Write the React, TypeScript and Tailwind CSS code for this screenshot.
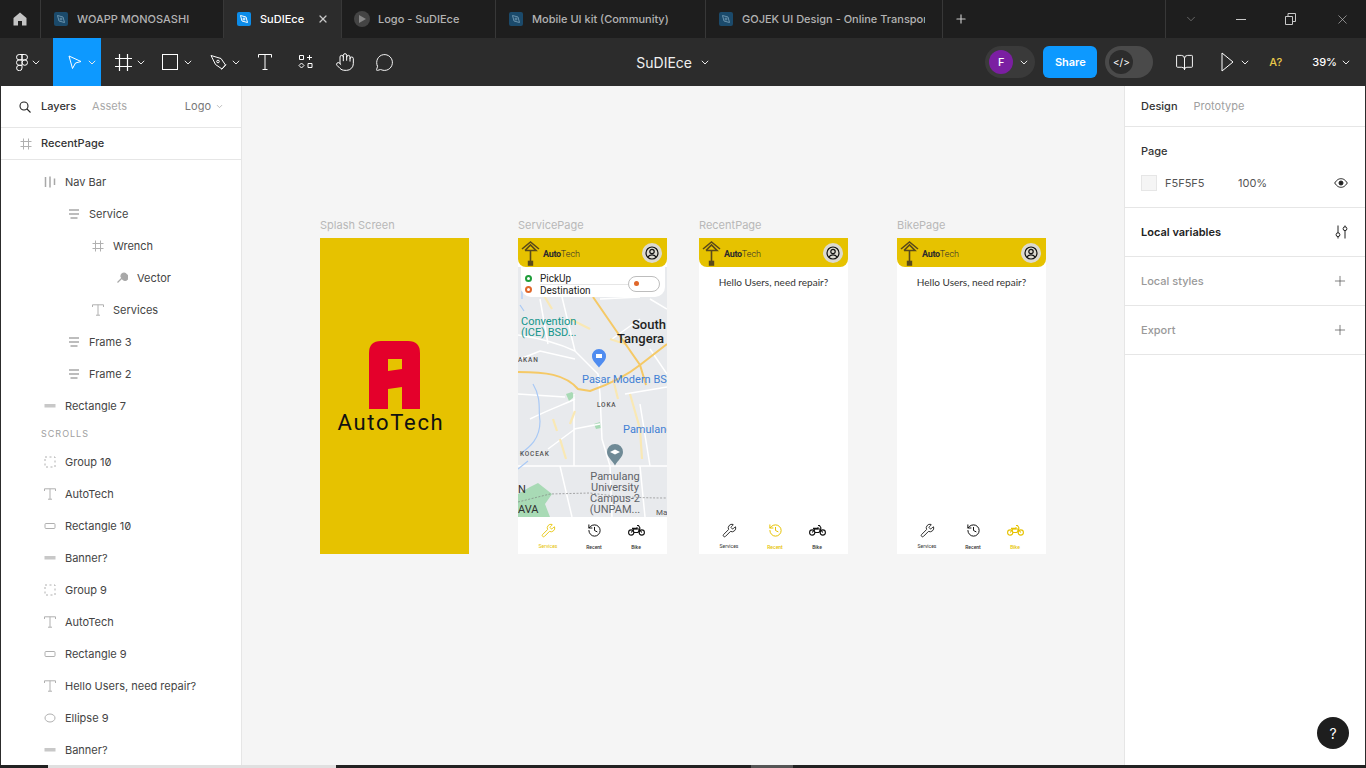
import { BookOpen, ChevronDown, Hand, History, MessageCircle, Plus, Wrench, X } from "lucide-react";

const font = "font-['Inter','Liberation_Sans',sans-serif]";

function TabIcon({ active }: { active?: boolean }) {
  return (
    <span className={`flex h-[14px] w-[14px] items-center justify-center rounded-[2px] ${active ? "bg-[#0c8ce9]" : "bg-[#1b4a6b]"}`}>
      <svg width="10" height="10" viewBox="0 0 10 10" fill="none" stroke={active ? "#fff" : "#6b93ad"} strokeWidth="1">
        <path d="M1.5 1.5 L7 3 L8.5 8.5 L3 7 Z" />
        <circle cx="5" cy="5" r="1" />
      </svg>
    </span>
  );
}

function Tab({ title, width, active, play, clip }: { title: string; width: string; active?: boolean; play?: boolean; clip?: boolean }) {
  return (
    <div className={`flex h-full items-center overflow-hidden border-r border-[#383838] ${play ? "gap-[8px] pl-[12px]" : "gap-[9px] pl-[13px]"} ${width} ${active ? "bg-[#2c2c2c]" : ""}`}>
      {play ? (
        <span className="flex h-[16px] w-[16px] shrink-0 items-center justify-center rounded-full bg-[#444]">
          <svg width="7" height="8" viewBox="0 0 7 8"><path d="M0 0 L7 4 L0 8 Z" fill="#888" /></svg>
        </span>
      ) : (
        <span className="shrink-0"><TabIcon active={active} /></span>
      )}
      <span className={`whitespace-nowrap text-[11px] font-medium ${clip ? "w-[183px] overflow-hidden" : ""} ${active ? "text-white" : "text-[#b3b3b3]"}`}>{title}</span>
      {active && <X size={12} strokeWidth={2.5} className="ml-[4px] shrink-0 text-[#c8c8c8]" />}
    </div>
  );
}

function TabBar() {
  return (
    <div className="flex h-[38px] shrink-0 items-center bg-[#1e1e1e]">
      <div className="flex h-full w-[41px] items-center justify-center border-r border-[#383838]">
        <svg width="14" height="14" viewBox="0 0 14 14"><path d="M7 0.5 L13.5 6 V13.5 H9 V9 H5 V13.5 H0.5 V6 Z" fill="#c4c4c4" /></svg>
      </div>
      <Tab title="WOAPP MONOSASHI" width="w-[183px]" />
      <Tab title="SuDIEce" width="w-[118px]" active />
      <Tab title="Logo - SuDIEce" width="w-[154px]" play />
      <Tab title="Mobile UI kit (Community)" width="w-[210px]" />
      <Tab title="GOJEK UI Design - Online Transport" width="w-[237px]" clip />
      <div className="flex w-[36px] justify-center"><Plus size={14} className="text-[#c8c8c8]" /></div>
      <div className="flex-1" />
      <div className="flex h-full items-center border-l border-[#383838] text-[#c8c8c8]">
        <ChevronDown size={14} strokeWidth={1} className="ml-[18px] text-[#999]" />
        <div className="ml-[38px] h-[1px] w-[10px] bg-[#c8c8c8]" />
        <svg className="ml-[39px]" width="11" height="12" viewBox="0 0 11 12" fill="none" stroke="#c8c8c8"><path d="M0.5 3.5 H7.5 V11.5 H0.5 Z M3 3.5 V0.5 H10.5 V8.5 H7.5" /></svg>
        <X size={15} strokeWidth={1} className="ml-[39px] mr-[16px]" />
      </div>
    </div>
  );
}

function Caret({ className = "" }: { className?: string }) {
  return (
    <svg className={className} width="8" height="5" viewBox="0 0 8 5" fill="none" stroke="#e8e8e8" strokeWidth="1">
      <path d="M0.8 0.8 L4 4 L7.2 0.8" />
    </svg>
  );
}

function ToolBar() {
  return (
    <div className="flex h-[48px] shrink-0 items-center bg-[#2c2c2c] text-white">
      <div className="flex w-[53px] items-center pl-[16px]">
        <svg width="12" height="17" viewBox="0 0 12 17" fill="none" stroke="#fff" strokeWidth="1">
          <path d="M6 .5 H3.2 a2.7 2.7 0 0 0 0 5.4 H6 Z M6 .5 H8.8 a2.7 2.7 0 0 1 0 5.4 H6 Z M6 5.9 H3.2 a2.7 2.7 0 0 0 0 5.4 H6 Z M6 11.3 H3.2 a2.7 2.7 0 1 0 2.8 2.7 Z" />
          <circle cx="8.8" cy="8.6" r="2.7" />
        </svg>
        <Caret className="ml-[4px]" />
      </div>
      <div className="flex h-full w-[48px] items-center bg-[#0d99ff] pl-[15px]">
        <svg width="14" height="15" viewBox="0 0 14 15" fill="none" stroke="#fff" strokeWidth="1">
          <path d="M1 1 L13 6.5 L7.5 8 L4.5 13.5 Z" />
        </svg>
        <Caret className="ml-[6px]" />
      </div>
      <div className="flex w-[48px] items-center pl-[14px]">
        <svg width="17" height="17" viewBox="0 0 17 17" fill="none" stroke="#fff" strokeWidth="1.2">
          <path d="M0 4.5 H17 M0 12.5 H17 M4.5 0 V17 M12.5 0 V17" />
        </svg>
        <Caret className="ml-[5px]" />
      </div>
      <div className="flex w-[48px] items-center pl-[13px]">
        <span className="h-[16px] w-[16px] border border-white" />
        <Caret className="ml-[6px]" />
      </div>
      <div className="flex w-[48px] items-center pl-[13px]">
        <svg width="17" height="17" viewBox="0 0 17 17" fill="none" stroke="#fff" strokeWidth="1">
          <path d="M1 1.5 L11 4.5 L15.5 11 L12 15 L5.5 10.5 Z M11.5 15.5 L16 10.5" />
          <circle cx="8" cy="7.5" r="1.3" />
        </svg>
        <Caret className="ml-[5px]" />
      </div>
      <div className="flex w-[40px] items-center pl-[13px]">
        <svg width="14" height="16" viewBox="0 0 14 16" fill="none" stroke="#fff" strokeWidth="1">
          <path d="M.5 3.5 V.5 H13.5 V3.5 M7 .5 V15.5 M4.5 15.5 H9.5" />
        </svg>
      </div>
      <div className="flex w-[40px] items-center pl-[13px]">
        <svg width="16" height="16" viewBox="0 0 16 16" fill="none" stroke="#fff" strokeWidth="1">
          <path d="M1.5 1.5 H5.5 V5.5 H1.5 Z M11.5 1 V6 M9 3.5 H14 M3.5 9 L6 11.5 L3.5 14 L1 11.5 Z M10 9.5 H14 V13.5 H10 Z" />
        </svg>
      </div>
      <div className="flex w-[40px] items-center pl-[10px]">
        <Hand size={20} strokeWidth={1.2} />
      </div>
      <div className="flex w-[40px] items-center pl-[10px]">
        <MessageCircle size={19} strokeWidth={1.2} />
      </div>
      <div className="flex w-[304px] items-center justify-end">
        <span className="text-[14px] font-normal text-[#f0f0f0]">SuDIEce</span>
        <Caret className="ml-[9px]" />
      </div>
      <div className="flex-1" />
      <div className="flex h-[32px] w-[50px] items-center rounded-full bg-[#3a3a3a] pl-[4px]">
        <span className="flex h-[24px] w-[24px] items-center justify-center rounded-full bg-[#7b1fa2] text-[11px] font-medium">F</span>
        <Caret className="ml-[7px]" />
      </div>
      <div className="ml-[8px] flex h-[32px] w-[54px] items-center justify-center rounded-[6px] bg-[#0d99ff] text-[11px] font-semibold">Share</div>
      <div className="ml-[8px] flex h-[32px] w-[48px] items-center rounded-full bg-[#4a4a4a] pl-[4px]">
        <span className="flex h-[24px] w-[24px] items-center justify-center rounded-full bg-[#2c2c2c] text-[10px]">&lt;/&gt;</span>
      </div>
      <BookOpen size={19} strokeWidth={1.2} className="ml-[22px]" />
      <svg className="ml-[27px]" width="13" height="20" viewBox="0 0 13 20" fill="none" stroke="#fff"><path d="M1 1 L12 10 L1 19 Z" /></svg>
      <Caret className="ml-[7px]" />
      <span className="ml-[20px] text-[11px] font-medium text-[#e8c84a]">A?</span>
      <span className="ml-[30px] text-[11px] font-medium">39%</span>
      <Caret className="ml-[5px] mr-[16px]" />
    </div>
  );
}

type IconKind = "hash" | "bars" | "lines" | "vector" | "text" | "rectThin" | "rect" | "group" | "ellipse";

function LayerIcon({ kind }: { kind: IconKind }) {
  const s = "#b0b0b0";
  return (
    <svg width="12" height="12" viewBox="0 0 12 12" fill="none" stroke={s} strokeWidth="1" className="shrink-0">
      {kind === "hash" && <path d="M0.5 3.5 H11.5 M0.5 8.5 H11.5 M3.5 .5 V11.5 M8.5 .5 V11.5" />}
      {kind === "bars" && <path d="M1.5 1 V11 M6 .5 V11.5 M10.5 2.5 V9" strokeWidth="1.5" stroke="#a8a8a8" />}
      {kind === "lines" && <path d="M1 2 H11 M1 6 H11 M2.5 10 H9.5" strokeWidth="1.5" stroke="#a8a8a8" />}
      {kind === "vector" && <path d="M1.5 10.5 L6 6 M5 4.5 a3 3 0 0 1 5.5 -2 L8 4 L9 5 L11 3 a3 3 0 0 1 -4 4.5 Z" fill="#a8a8a8" strokeWidth="1.2" stroke="#a8a8a8" />}
      {kind === "text" && <path d="M.5 3 V.8 H11.5 V3 M6 .8 V11.2 M4 11.2 H8" />}
      {kind === "rectThin" && <rect x="1" y="4.5" width="10" height="2.5" fill="#c8c8c8" stroke="#c8c8c8" />}
      {kind === "rect" && <rect x="1" y="3.5" width="10" height="5" rx="1" />}
      {kind === "group" && <rect x="1" y="1" width="10" height="10" strokeDasharray="2 2.5" />}
      {kind === "ellipse" && <ellipse cx="6" cy="6" rx="5" ry="4" />}
    </svg>
  );
}

const layersTop: { name: string; kind: IconKind; pad: string }[] = [
  { name: "Nav Bar", kind: "bars", pad: "pl-[43px]" },
  { name: "Service", kind: "lines", pad: "pl-[67px]" },
  { name: "Wrench", kind: "hash", pad: "pl-[91px]" },
  { name: "Vector", kind: "vector", pad: "pl-[115px]" },
  { name: "Services", kind: "text", pad: "pl-[91px]" },
  { name: "Frame 3", kind: "lines", pad: "pl-[67px]" },
  { name: "Frame 2", kind: "lines", pad: "pl-[67px]" },
  { name: "Rectangle 7", kind: "rectThin", pad: "pl-[43px]" },
];

const layersBottom: { name: string; kind: IconKind }[] = [
  { name: "Group 10", kind: "group" },
  { name: "AutoTech", kind: "text" },
  { name: "Rectangle 10", kind: "rect" },
  { name: "Banner?", kind: "rectThin" },
  { name: "Group 9", kind: "group" },
  { name: "AutoTech", kind: "text" },
  { name: "Rectangle 9", kind: "rect" },
  { name: "Hello Users, need repair?", kind: "text" },
  { name: "Ellipse 9", kind: "ellipse" },
  { name: "Banner?", kind: "rectThin" },
];

function LayerRow({ name, kind, pad }: { name: string; kind: IconKind; pad: string }) {
  return (
    <div className={`flex h-[32px] items-center gap-[9px] ${pad}`}>
      <LayerIcon kind={kind} />
      <span className="whitespace-nowrap text-[11px] text-[#444] slashed-zero">{name}</span>
    </div>
  );
}

function LeftPanel() {
  return (
    <div className="flex w-[242px] shrink-0 flex-col overflow-hidden border-l border-r border-l-[#2c2c2c] border-r-[#e6e6e6] bg-white">
      <div className="flex h-[42px] shrink-0 items-center border-b border-[#e6e6e6] pl-[18px] pr-[17px] text-[11px]">
        <svg width="12" height="12" viewBox="0 0 12 12" fill="none" stroke="#222" strokeWidth="1.1"><circle cx="5" cy="5" r="4" /><path d="M8 8 L11.5 11.5" /></svg>
        <span className="ml-[10px] font-medium text-[#333]">Layers</span>
        <span className="ml-[16px] text-[#a8a8a8]">Assets</span>
        <span className="ml-auto text-[#777]">Logo</span>
        <ChevronDown size={9} className="ml-[4px] text-[#aaa]" />
      </div>
      <div className="flex h-[32px] shrink-0 items-center gap-[9px] border-b border-[#e6e6e6] pl-[19px]">
        <LayerIcon kind="hash" />
        <span className="text-[11px] font-medium text-[#333]">RecentPage</span>
      </div>
      <div className="pt-[6px]">
        {layersTop.map((l) => (
          <LayerRow key={l.name} name={l.name} kind={l.kind} pad={l.pad} />
        ))}
        <div className="flex h-[24px] items-center pl-[40px] text-[9px] tracking-[1px] text-[#a0a0a0]">SCROLLS</div>
        {layersBottom.map((l, i) => (
          <LayerRow key={i} name={l.name} kind={l.kind} pad="pl-[43px]" />
        ))}
      </div>
    </div>
  );
}

function CraneLogo() {
  return (
    <svg width="20" height="26" viewBox="0 0 20 26" fill="none" stroke="#5a4a1a" strokeWidth="1.6" className="shrink-0">
      <path d="M1 9 L9.5 2 L18 9 M4 10.5 H15 L9.5 5 L4 10.5 M9.5 10 V24" />
      <rect x="7.6" y="21.5" width="3.8" height="3.5" fill="#5a4a1a" />
    </svg>
  );
}

function AppHeader() {
  return (
    <div className="relative z-10 flex h-[29px] items-center rounded-b-[8px] bg-[#e6c200] pl-[3px] pr-[5px]">
      <CraneLogo />
      <span className="ml-[2px] mt-[3px] text-[9px] leading-none text-[#2b2b2b] font-['Roboto',sans-serif]">
        <span className="font-bold tracking-[-0.3px]">Auto</span>
        <span className="font-light">Tech</span>
      </span>
      <span className="ml-auto flex h-[20px] w-[20px] items-center justify-center rounded-full bg-[#dcdad0]">
        <svg width="14" height="14" viewBox="0 0 14 14" fill="none" stroke="#111" strokeWidth="1.2">
          <circle cx="7" cy="7" r="6" />
          <circle cx="7" cy="5.5" r="2.2" />
          <path d="M3 11 a4.5 4 0 0 1 8 0" />
        </svg>
      </span>
    </div>
  );
}

function MotorBike() {
  return (
    <svg width="17" height="12" viewBox="0 0 17 12" fill="none" stroke="currentColor" strokeWidth="1.1">
      <circle cx="3.2" cy="8.5" r="2.6" />
      <circle cx="13.8" cy="8.5" r="2.6" />
      <path d="M3.2 8.5 L6 5 H11 L13.8 8.5 M6 8.5 H10 L12 4 L10.5 1.5 H9" />
      <path d="M4 4.5 H8.5 L9.5 3.5" strokeWidth="1.6" />
    </svg>
  );
}

function BottomNav({ active }: { active: "services" | "recent" | "bike" }) {
  const tone = (k: string) => (active === k ? "text-[#e6c200]" : "text-[#111]");
  const label = (k: string) => (active === k ? "text-[#e6c200]" : "text-[#333]");
  return (
    <div className="grid h-[36px] grid-cols-[60px_32px_52px] bg-white pt-[5px] font-['Roboto',sans-serif]">
      <div className={`flex flex-col items-center ${tone("services")}`}>
        <Wrench size={15} strokeWidth={1.4} />
        <span className={`mt-[5px] text-[5px] leading-[6px] ${label("services")}`}>Services</span>
      </div>
      <div className={`flex flex-col items-center ${tone("recent")}`}>
        <History size={15} strokeWidth={1.6} />
        <span className={`mt-[6px] text-[5px] font-medium leading-[6px] ${label("recent")}`}>Recent</span>
      </div>
      <div className={`flex flex-col items-center pt-[1px] ${tone("bike")}`}>
        <MotorBike />
        <span className={`mt-[8px] text-[5px] font-medium leading-[6px] ${label("bike")}`}>Bike</span>
      </div>
    </div>
  );
}

function MapArt() {
  return (
    <svg width="149" height="250" viewBox="518 268 149 250" className="block font-['Roboto',sans-serif]">
      <rect x="518" y="268" width="149" height="250" fill="#e8eaed" />
      <path d="M518 518 V495 L530 488 L538 484 L552 495 L545 505 L550 518 Z" fill="#a8dab5" />
      <path d="M566 395 l6 -2 l3 4 l-6 5 Z M594 425 l6 -2 l1 6 l-5 1 Z" fill="#a8dab5" />
      <g fill="none" stroke="#fff" strokeWidth="1.5">
        <path d="M518 336 C545 340 560 345 575 352 L598 375 L600 395 L602 440 L610 467 L612 518" />
        <path d="M518 467 H667 M574 430 L600 425 M574 395 V467 M530 420 C550 410 565 405 575 400" />
        <path d="M600 300 L640 298 M625 395 L667 388 M640 405 L650 467 M575 360 L540 352 L520 360" />
        <path d="M562 298 L575 352 M540 300 L548 345 M518 395 L565 398 M612 340 L640 320 M650 300 L667 310 M560 467 L572 518 M640 467 L645 518 M575 430 L548 450 M650 350 L667 375" />
      </g>
      <g fill="none" stroke="#f9e8b4" strokeWidth="2.2">
        <path d="M630 395 L640 430 L642 460 M570 320 L590 330 M610 340 L625 345 M560 440 L566 460 M553 420 L557 432 M540 290 L552 310 M613 380 L618 400 M575 412 L570 425" />
      </g>
      <g fill="none" stroke="#f5c966" strokeWidth="2">
        <path d="M593 298 L615 330 L640 366 L646 386" />
        <path d="M518 373 C545 373 565 375 578 390 L590 392 C610 385 625 378 640 366 L667 345" />
      </g>
      <path d="M533 385 C542 400 538 412 540 422 C540 440 530 448 520 455 M518 470 L528 462 M522 292 V300 M520 306 L524 312" fill="none" stroke="#a9c9f5" strokeWidth="1.2" />
      <path d="M518 503 L550 495 L590 494 C620 498 640 499 667 499" fill="none" stroke="#777" strokeWidth="0.6" strokeDasharray="2 1.5" />
      <g fill="#12958a" fontSize="11">
        <text x="521" y="326">Convention</text>
        <text x="521" y="337">(ICE) BSD...</text>
      </g>
      <g fill="#1f1f1f" fontSize="13" fontWeight="500">
        <text x="632" y="330">South</text>
        <text x="617" y="344">Tangera</text>
      </g>
      <g fill="#555" fontSize="6.5" letterSpacing="0.8" fontWeight="500">
        <text x="518" y="363">AKAN</text>
        <text x="597" y="408">LOKA</text>
        <text x="520" y="457">KOCEAK</text>
      </g>
      <g fill="#3f7fd4" fontSize="11">
        <text x="582" y="384">Pasar Modern BS</text>
        <text x="623" y="434">Pamulang</text>
      </g>
      <path d="M599 350 a7 7 0 0 1 7 7.5 c0 4 -4 7 -7 11 c-3 -4 -7 -7 -7 -11 a7 7 0 0 1 7 -7.5 Z" fill="#4f8cf0" />
      <rect x="596" y="355" width="6" height="4" fill="#fff" />
      <path d="M615 445 a8 8 0 0 1 8 8 c0 5 -5 8 -8 13.5 c-3 -5.5 -8 -8.5 -8 -13.5 a8 8 0 0 1 8 -8 Z" fill="#6f8a96" />
      <path d="M610 453 L615 450.5 L620 453 L615 455.5 Z" fill="#fff" />
      <g fill="#5f6368" fontSize="11" textAnchor="middle">
        <text x="615" y="481">Pamulang</text>
        <text x="615" y="492">University</text>
        <text x="615" y="503">Campus-2</text>
        <text x="615" y="514">(UNPAM...</text>
      </g>
      <g fill="#2f2f2f" fontSize="11">
        <text x="518" y="494">N</text>
        <text x="518" y="514">AVA</text>
      </g>
      <text x="656" y="516" fontSize="8" fill="#555">Ma</text>
    </svg>
  );
}

function ServicePage() {
  return (
    <div className="flex h-full flex-col overflow-hidden bg-white">
      <AppHeader />
      <div className="relative h-[251px]">
        <MapArt />
        <div className="absolute left-[3px] top-0 flex h-[30px] w-[144px] items-center rounded-b-[10px] bg-white pl-[4px] pt-[5px] text-[10px] leading-[11px] text-[#222] font-['Roboto',sans-serif]">
          <div className="-mt-[2px] flex flex-col gap-[4px]">
            <span className="h-[7px] w-[7px] rounded-full border-[2px] border-[#1f9d3a]" />
            <span className="h-[7px] w-[7px] rounded-full border-[2px] border-[#e0672a]" />
          </div>
          <div className="ml-[8px] flex w-[88px] flex-col">
            <span className="border-b border-[#e6e6e6]">PickUp</span>
            <span>Destination</span>
          </div>
          <div className="-mt-[2px] flex h-[16px] w-[32px] items-center rounded-full border border-[#bdbdbd] pl-[5px]">
            <span className="h-[5px] w-[5px] rounded-full bg-[#e0672a]" />
          </div>
        </div>
      </div>
      <BottomNav active="services" />
    </div>
  );
}

function BlankPage({ active }: { active: "recent" | "bike" }) {
  return (
    <div className="flex h-full flex-col bg-white">
      <AppHeader />
      <div className="flex-1 pt-[9px] text-center text-[10px] leading-[12px] text-[#333] font-['Lato',sans-serif]">Hello Users, need repair?</div>
      <BottomNav active={active} />
    </div>
  );
}

function Splash() {
  return (
    <div className="flex h-full flex-col items-center bg-[#e6c200] pt-[103px]">
      <svg width="51" height="68" viewBox="0 0 51 68" className="shrink-0">
        <path d="M12 0 H39 Q51 0 51 12 V68 H33 V46 L19 48 V68 H0 V12 Q0 0 12 0 Z M19 18 V30 L33 28 V18 Z" fill="#e4002b" fillRule="evenodd" />
      </svg>
      <span className="mr-[7px] mt-[2px] text-[22px] font-normal leading-[24px] tracking-[1.7px] text-[#111] font-['Roboto',sans-serif]">AutoTech</span>
    </div>
  );
}

function Canvas() {
  const frames = [
    { title: "Splash Screen", left: "left-[78px]", el: <Splash /> },
    { title: "ServicePage", left: "left-[276px]", el: <ServicePage /> },
    { title: "RecentPage", left: "left-[457px]", el: <BlankPage active="recent" /> },
    { title: "BikePage", left: "left-[655px]", el: <BlankPage active="bike" /> },
  ];
  return (
    <div className="relative min-w-0 flex-1 overflow-hidden bg-[#f5f5f5]">
      {frames.map((f) => (
        <div key={f.title} className={`absolute top-[132px] w-[149px] ${f.left}`}>
          <div className="h-[20px] text-[11px] leading-[14px] text-[#b8b8b8]">{f.title}</div>
          <div className="h-[316px]">{f.el}</div>
        </div>
      ))}
    </div>
  );
}

function PanelSection({ title, strong, children }: { title: string; strong?: boolean; children: React.ReactNode }) {
  return (
    <div className="flex h-[49px] items-center justify-between border-b border-[#e6e6e6] pl-[16px] pr-[17px]">
      <span className={`text-[11px] ${strong ? "font-semibold text-[#222]" : "font-medium text-[#999]"}`}>{title}</span>
      {children}
    </div>
  );
}

function RightPanel() {
  return (
    <div className="relative flex w-[242px] shrink-0 flex-col border-l border-r border-l-[#e6e6e6] border-r-[#2c2c2c] bg-white">
      <div className="flex h-[41px] items-center gap-[16px] border-b border-[#e6e6e6] pl-[16px] text-[11px]">
        <span className="font-medium text-[#333]">Design</span>
        <span className="text-[#a0a0a0]">Prototype</span>
      </div>
      <div className="h-[81px] border-b border-[#e6e6e6] pl-[16px] pr-[17px] pt-[17px]">
        <div className="text-[11px] font-medium leading-[14px] text-[#333]">Page</div>
        <div className="mt-[17px] flex items-center text-[11px] text-[#555]">
          <span className="h-[16px] w-[16px] border border-[#e6e6e6] bg-[#f5f5f5]" />
          <span className="ml-[8px] w-[73px]">F5F5F5</span>
          <span>100%</span>
          <svg className="ml-auto" width="14" height="10" viewBox="0 0 14 10" fill="none" stroke="#222" strokeWidth="1">
            <path d="M.7 5 C3 1.5 5 .7 7 .7 C9 .7 11 1.5 13.3 5 C11 8.5 9 9.3 7 9.3 C5 9.3 3 8.5 .7 5 Z" />
            <circle cx="7" cy="5" r="2" fill="#222" />
          </svg>
        </div>
      </div>
      <PanelSection title="Local variables" strong>
        <svg width="13" height="14" viewBox="0 0 13 14" fill="none" stroke="#222" strokeWidth="1">
          <path d="M3 0.5 V8 M3 11.5 V13.5 M10 0.5 V2 M10 5.5 V13.5" />
          <circle cx="3" cy="9.7" r="1.9" />
          <circle cx="10" cy="3.7" r="1.9" />
        </svg>
      </PanelSection>
      <PanelSection title="Local styles">
        <Plus size={16} strokeWidth={1} className="text-[#444]" />
      </PanelSection>
      <PanelSection title="Export">
        <Plus size={16} strokeWidth={1} className="text-[#444]" />
      </PanelSection>
      <div className="absolute bottom-[16px] right-[16px] flex h-[32px] w-[32px] items-center justify-center rounded-full bg-[#1e1e1e] text-[14px] text-white">?</div>
    </div>
  );
}

export default function App() {
  return (
    <div className={`flex h-[768px] w-[1366px] flex-col overflow-hidden bg-[#222] ${font}`}>
      <TabBar />
      <ToolBar />
      <div className="flex min-h-0 flex-1">
        <LeftPanel />
        <Canvas />
        <RightPanel />
      </div>
      <div className="flex h-[3px] shrink-0 bg-[#222]">
        <div className="ml-[48px] w-[288px] bg-[#e0e0e0]" />
        <div className="ml-[415px] w-[42px] bg-[#555]" />
      </div>
    </div>
  );
}
